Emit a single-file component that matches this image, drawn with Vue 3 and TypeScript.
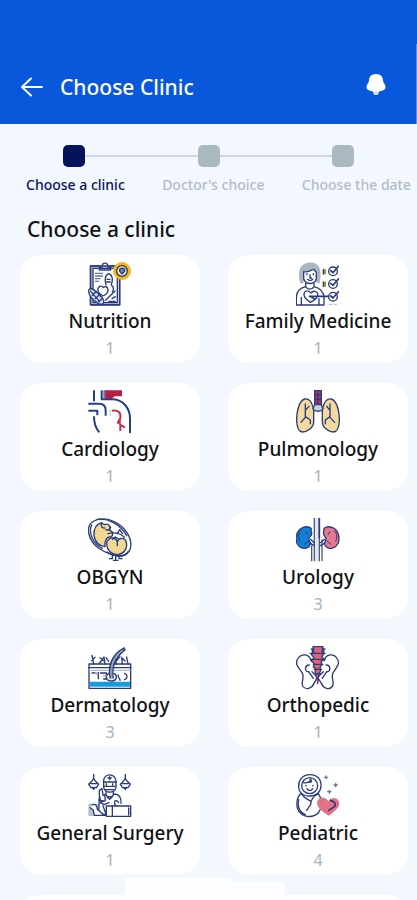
<script setup lang="ts">
interface Clinic {
  id: string
  name: string
  count: number
}

const steps: string[] = ['Choose a clinic', "Doctor's choice", 'Choose the date']

const clinics: Clinic[] = [
  { id: 'nutrition', name: 'Nutrition', count: 1 },
  { id: 'family', name: 'Family Medicine', count: 1 },
  { id: 'cardiology', name: 'Cardiology', count: 1 },
  { id: 'pulmonology', name: 'Pulmonology', count: 1 },
  { id: 'obgyn', name: 'OBGYN', count: 1 },
  { id: 'urology', name: 'Urology', count: 3 },
  { id: 'dermatology', name: 'Dermatology', count: 3 },
  { id: 'orthopedic', name: 'Orthopedic', count: 1 },
  { id: 'surgery', name: 'General Surgery', count: 1 },
  { id: 'pediatric', name: 'Pediatric', count: 4 },
]
</script>

<template>
  <div class="screen">
    <header class="bar">
      <button class="icon-button" type="button" aria-label="Back">
        <svg class="back" viewBox="0 0 24 20" aria-hidden="true">
          <path d="M22 10H2M11 1.500L2 10l9 8.500" />
        </svg>
      </button>
      <h1 class="title">Choose Clinic</h1>
      <button class="icon-button" type="button" aria-label="Notifications">
        <svg class="bell" viewBox="0 0 20 24" aria-hidden="true">
          <path d="M10 2C5.500 2 3 4.800 3 8.500c0 2.500-2.500 3.500-2.500 6.500 0 2.800 3 4.500 9.500 4.500s9.500-1.700 9.500-4.500c0-3-2.500-4-2.500-6.500C17 4.800 14.500 2 10 2z" />
          <path d="M7 19h6v2.500h-1V23H8v-1.500H7z" opacity="0.8" />
        </svg>
      </button>
    </header>

    <nav class="stepper" aria-label="Booking steps">
      <div class="track" aria-hidden="true">
        <template v-for="(step, i) in steps" :key="step">
          <span v-if="i > 0" class="line"></span>
          <span class="node" :class="{ active: i === 0 }"></span>
        </template>
      </div>
      <ol class="labels">
        <li v-for="(step, i) in steps" :key="step" :class="{ current: i === 0 }">{{ step }}</li>
      </ol>
    </nav>

    <main>
      <h2 class="heading">Choose a clinic</h2>
      <div class="grid">
        <button v-for="clinic in clinics" :key="clinic.id" class="card" type="button">
          <svg class="art" viewBox="54 22 132 132" aria-hidden="true">
            <g v-if="clinic.id === 'nutrition'">
              <path d="M62 34h87v117H62z" fill="#c5ccdc" />
              <path d="M69 41h73v103H69z" fill="#fff" />
              <path d="M90 34H61v116h88V76M120 34h12M88 46v-8h8c0-17 18-17 18 0h8v8z" />
              <path d="M76 56h22M76 64h22M76 72h14M76 80h10" stroke="#68779b" />
              <path d="M108 91c-4-13-4-30 8-34 13 4 13 20 8 34 7 6 8 14 3 21" fill="#fff" />
              <path d="M111 74h9M110 82h11" />
              <path d="M98 124c-15-8-18-22-10-28 5-3 9-1 12 3 5-6 13-3 14 5 1 9-6 16-16 20z" fill="#fff" />
              <path d="M57 105c6-9 24 5 42 28 6 12-1 19-13 14-18-10-34-29-29-42z" fill="#d9deeb" />
              <path d="M62 110l27 31M67 122l12-12M76 132l12-12M86 141l10-9" />
              <path d="M107 137l28-28M126 132l10-6M116 140h20" />
              <circle cx="156" cy="49" r="27" fill="#f7b51e" stroke="none" />
              <circle cx="156" cy="49" r="16" fill="#fff4cf" stroke="#253466" />
              <path d="M149 44c5-4 11-4 15 0v6l-8 8-7-8z" fill="#7584ad" />
            </g>

            <g v-else-if="clinic.id === 'family'">
              <path d="M68 87c-7-17-8-43 4-54 13-12 39-13 49 1 9 12 8 37 3 53l-12-5 1-28-34-5-2 36z" fill="#aab7c2" stroke="none" />
              <path d="M77 51c14 4 21-6 31-7l7 9v20c-5 16-30 20-38 0z" fill="#fff" />
              <path d="M87 57v3M106 57v3M96 60v10h5M89 74c4 4 11 4 15 0" />
              <path d="M83 86v10c-20 5-28 17-28 34v21h83v-21c0-17-11-29-30-34V86M83 96c6 10 19 10 25 0M70 128v22M123 132v18" />
              <path d="M97 143c-15-10-22-20-18-29 4-7 14-7 19 1 7-8 18-6 21 1 3 10-7 19-22 27z" fill="#fff" />
              <path d="M94 125h61M97 125l14 9" stroke-width="5" />
              <g v-for="y in [50, 88, 126]" :key="y">
                <circle cx="165" :cy="y" r="13" fill="#fff" />
                <path :d="`M158 ${y - 2}l7 6 16-19`" stroke-width="5" />
              </g>
              <path d="M134 44h10v15h-10zM134 81h10v15h-10z" fill="#a28a2d" stroke="none" />
              <path d="M136 44v15M136 81v15" stroke-width="3" />
              <path d="M153 149h8M168 149h8" stroke="#c1c6ce" />
            </g>

            <g v-else-if="clinic.id === 'cardiology'" class="bold">
              <path d="M103 23h53v18h-22l-10 9h-21z" fill="#b71e45" stroke="none" />
              <path d="M72 23v33M95 23v27h31c31 0 54 24 54 57v44" />
              <path d="M103 23v25" stroke="#6f7ca8" />
              <path d="M55 63h33c13 0 19 8 19 20v16M55 84h27v14M72 101c0 21 5 36 16 48" />
              <path d="M126 84c18-3 28 7 25 21-1 9-5 14 0 22v18M151 127l14 7M149 109l-7 14" stroke="#c7304c" />
              <path d="M121 91v10M117 85h9" stroke="#aebccd" stroke-width="3" />
            </g>

            <g v-else-if="clinic.id === 'pulmonology'">
              <path d="M107 82c-5-26-15-36-27-33-18 5-25 43-24 66 1 19 5 32 17 33 15 0 34-14 34-30z" fill="#f3d99d" />
              <path d="M133 82c5-26 15-36 27-33 18 5 25 43 24 66-1 19-5 32-17 33-15 0-34-14-34-30z" fill="#f3d99d" />
              <path d="M110 23h20v42h-20z" fill="#b83461" />
              <path d="M110 36h20M110 50h20M120 23v40" stroke-width="4" />
              <path d="M110 66h20l5 13c-6 9-24 9-30 0z" fill="#c8d1de" />
              <path d="M82 64v40l-13 15M82 83l11-12M82 102l15 10v11M156 64v40l14 15M156 83l-10-12M156 102l-14 10v11" />
            </g>

            <g v-else-if="clinic.id === 'obgyn'">
              <path d="M72 31c25-14 68-4 93 27 21 26 23 55 7 70-17 17-57 4-87-16C55 89 43 46 72 31z" fill="#fff" />
              <path d="M65 43c-11 23 4 55 32 70M81 26c34-5 69 15 89 49M112 124c28 18 53 16 63-2" />
              <path d="M72 76c-1-21 6-36 22-39l10 5c11-6 20 6 14 17 13 3 13 15 4 20-14-2-19 16-17 29-18-2-29-15-33-32z" fill="#f2d891" />
              <path d="M95 36c-4 12 1 17 9 16M107 57c8 3 12 0 15-8" />
              <path d="M111 92c10-16 25-12 31 0 7-14 24-10 27 3 4 19-8 36-27 37-22-2-35-19-31-40z" fill="#f2d891" />
              <path d="M142 92v13M114 69c20-5 37-1 49 11M142 69l7-12 8 12M128 86c4-8 10-8 16-2" />
              <path d="M127 131v13h-9M137 134v15M147 132v12h9M130 149h14" />
            </g>

            <g v-else-if="clinic.id === 'urology'">
              <path d="M99 61c5-13-12-15-25-10-19 8-24 33-16 49 8 15 30 19 38 3 6-11-11-16 0-25 5-4 7-10 3-17z" fill="#137fd5" />
              <path d="M138 61c-4-13 13-15 26-10 19 8 23 33 15 49-8 15-30 19-38 3-5-11 10-16 0-25-4-4-6-10-3-17z" fill="#e67890" />
              <path d="M69 60c-8 9-9 20-4 31M90 72l-6-9M91 91l-12 10M169 60c10 10 9 22 4 32M150 72l6-9M148 92l11 9" stroke-width="3" />
              <path d="M124 22v128M132 87v63M109 22v128M101 106v44" stroke="#4a5a80" />
              <path d="M114 24v125M120 22v128" stroke="#adb8cb" stroke-width="2" />
              <path d="M124 22v59" stroke-width="5" />
              <path d="M98 86l11 11M140 86l-13 10M97 98l12 7M139 98l-12 7" />
            </g>

            <g v-else-if="clinic.id === 'dermatology'">
              <path d="M57 76h125v73H57z" fill="#fff" />
              <path d="M59 129h121v15H59z" fill="#139ddd" stroke="none" />
              <path d="M56 87h127" />
              <path d="M59 95h121" stroke="#aeb9cd" />
              <path d="M71 76l-5-26M87 76l13-18M105 76l-3-21M103 68l-13-11M139 76l-6-20M139 67l11-13M157 76l-2-20M174 76l-4-21M65 66l10-10M116 68l-8-11M165 67l-9-9" />
              <path d="M121 119c-7-33 3-72 42-91M129 118c-4-28 3-59 36-85" stroke-width="5" />
              <path d="M125 113c-3-33 6-60 31-77" stroke="#8f9baa" stroke-width="5" />
              <path d="M66 104c6-7 12 6 19-2v18M91 103h18v18h-8M116 104c-12 10-8 23 10 23 14-1 18-15 6-23M145 109c-4 5 6 11 5 16M164 104c10 4 9 15 0 19" />
              <path d="M76 105h7M101 111h8M121 119h7" stroke="#a1aabd" />
            </g>

            <g v-else-if="clinic.id === 'orthopedic'">
              <path d="M99 66C93 43 69 45 59 61c-11 17 8 30 15 44 4 17-5 26 0 37 9 14 29 7 34-8l10-18-16-17M139 66c5-23 30-21 39-5 11 17-8 30-14 44-4 17 5 26 0 37-10 14-29 7-34-8l-11-18 17-17" fill="#fff" />
              <path d="M94 79c-15 0-15 22-2 20l14 20M144 79c15 0 15 22 2 20l-13 20" />
              <path d="M105 24h30l-3 15 7 5-8 10 7 8-9 8 3 8-6 8 3 8-6 11-4 23-8-27 2-11-7-5 3-10-9-8 8-10-8-9 7-6z" fill="#de6479" />
              <path d="M100 31h7M133 31h8M96 44h45M98 62h43M106 77h29M109 92h21M112 105h15M103 31v9M137 31v9" />
              <path d="M119 120v15" stroke="#a72951" />
            </g>

            <g v-else-if="clinic.id === 'surgery'">
              <path d="M55 111h31v37H55z" fill="#b7c4cc" stroke="none" />
              <g v-for="x in [71, 166]" :key="x">
                <path :d="`M${x} 23v12l-5 8-10 10 7 10h16l7-10-10-10-5-8`" fill="#fff" />
                <path :d="`M${x - 9} 51h18M${x - 4} 62l4 6 4-6`" />
              </g>
              <path d="M101 45c-2-27 37-27 37 0v18c-5 18-32 18-37 0z" fill="#fff" />
              <path d="M100 46h39M103 59h33M106 69h25M119 30v9M114 34h10M109 51v4M128 51v4" />
              <path d="M108 76v7c0 10 22 10 22 0v-7M108 82L88 93l-2 47M131 82c18 0 23 12 22 28M112 91l7 7 8-8" />
              <path d="M96 66l-8 5v15l5 20 13-4-2-18-5 2zM87 100l12 2M146 107c-13-13-16 2-8 10M91 108l12 6 14-6" fill="#fff" />
              <path d="M66 115c11-5 15 2 16 13l16 14 18 4H73l-3-15-9-8" fill="#fff" />
              <path d="M99 117l9 26M109 118h73v31h-73z" fill="#fff" />
              <path d="M127 117v32M176 124v21" />
            </g>

            <g v-else>
              <path d="M72 78c-19 13-20 47-5 61 17 16 44 13 56-3 11-17 9-45-5-57" fill="#fff" />
              <path d="M96 24c-24 0-35 18-34 36 1 20 16 30 33 28 20 0 33-12 34-30 1-20-12-34-33-34z" fill="#fff" />
              <circle cx="95" cy="57" r="24" fill="#fff" />
              <path d="M76 48c12 3 22-3 21-11 9 8-3 13-3 8M84 56v2M105 56v2M87 66c4 8 13 8 17 0M71 81c5 12 17 16 28 23M121 82c-13 5-22 17-23 31l-12 18M62 99c-4 21 3 38 20 45" />
              <path d="M152 147c-27-16-39-32-34-44 6-14 24-15 33 1 10-13 25-13 31-1 7 14-7 29-30 44z" fill="#e27283" stroke="none" />
              <path d="M157 101c14 3 19 14 11 20l-16 10" stroke-width="5" />
              <path d="M144 28v8M140 32h8M173 50v10M168 55h10M154 71v9M149 75h10" stroke="#65759d" />
            </g>
          </svg>
          <span class="name">{{ clinic.name }}</span>
          <span class="count">{{ clinic.count }}</span>
        </button>
        <div class="card" aria-hidden="true"></div>
        <div class="card" aria-hidden="true"></div>
      </div>
    </main>
    <div class="sheet" aria-hidden="true"><span></span><span></span></div>
  </div>
</template>

<style>
body {
  margin: 0;
  background: #f3f7fe;
}
</style>

<style scoped>
.screen {
  position: relative;
  height: 100vh;
  overflow: hidden;
  background: #f3f7fe;
  color: #111216;
  font-family: "Noto Sans", "Open Sans", sans-serif;
}

button {
  border: 0;
  margin: 0;
  padding: 0;
  font: inherit;
  color: inherit;
  cursor: pointer;
}

.bar {
  position: relative;
  display: flex;
  align-items: center;
  gap: 16px;
  padding: 72px 31px 22px 20px;
  background: #0957da;
  color: #fff;
}

.bar::after {
  content: "";
  position: absolute;
  top: 44px;
  right: 0;
  bottom: 0;
  width: 1px;
  background: #6f86e5;
}

.icon-button {
  display: flex;
  background: none;
}

.back {
  width: 24px;
  height: 20px;
  fill: none;
  stroke: #fff;
  stroke-width: 2;
  stroke-linecap: round;
  stroke-linejoin: round;
}

.bell {
  width: 20px;
  height: 24px;
  margin-bottom: 6px;
  fill: #fff;
}

.title {
  flex: 1;
  margin: 0;
  font-size: 21px;
  font-weight: 500;
  line-height: 28px;
}

.stepper {
  padding-top: 21px;
}

.track {
  display: flex;
  align-items: center;
  padding: 0 63px;
}

.node {
  width: 22px;
  height: 22px;
  border-radius: 5px;
  background: #a9b9bf;
}

.node.active {
  background: #05145a;
}

.line {
  flex: 1;
  height: 2px;
  background: #d0d6e4;
}

.labels {
  display: flex;
  justify-content: space-between;
  margin: 0;
  padding: 8px 6px 0 26px;
  list-style: none;
  color: #b3bdc5;
  font-size: 14px;
  font-weight: 500;
  line-height: 20px;
  white-space: nowrap;
}

.labels .current {
  color: #0b1458;
}

.heading {
  margin: 0;
  padding: 20px 27px 12px;
  font-size: 21px;
  font-weight: 500;
  line-height: 28px;
}

.grid {
  display: grid;
  grid-template-columns: 1fr 1fr;
  gap: 21px 28px;
  padding: 0 9px 0 20px;
}

.card {
  display: flex;
  flex-direction: column;
  align-items: center;
  box-sizing: border-box;
  min-height: 107px;
  padding: 7px 4px 2px;
  border-radius: 20px;
  background: #fff;
}

.art {
  width: 44px;
  height: 44px;
  fill: none;
  stroke: #2a3b7c;
  stroke-width: 4;
  stroke-linecap: round;
  stroke-linejoin: round;
}

.bold {
  stroke: #263f83;
  stroke-width: 6;
  stroke-linecap: butt;
}

.name {
  font-size: 19px;
  font-weight: 500;
  line-height: 30px;
  white-space: nowrap;
}

.count {
  color: #a8b2b8;
  font-size: 16px;
  line-height: 24px;
}

.sheet {
  position: absolute;
  bottom: 0;
  left: 30%;
  display: flex;
  align-items: flex-end;
  width: 38%;
}

.sheet span {
  flex: 2;
  height: 22px;
  background: #fdfeff;
}

.sheet span + span {
  flex: 1;
  height: 18px;
}
</style>
